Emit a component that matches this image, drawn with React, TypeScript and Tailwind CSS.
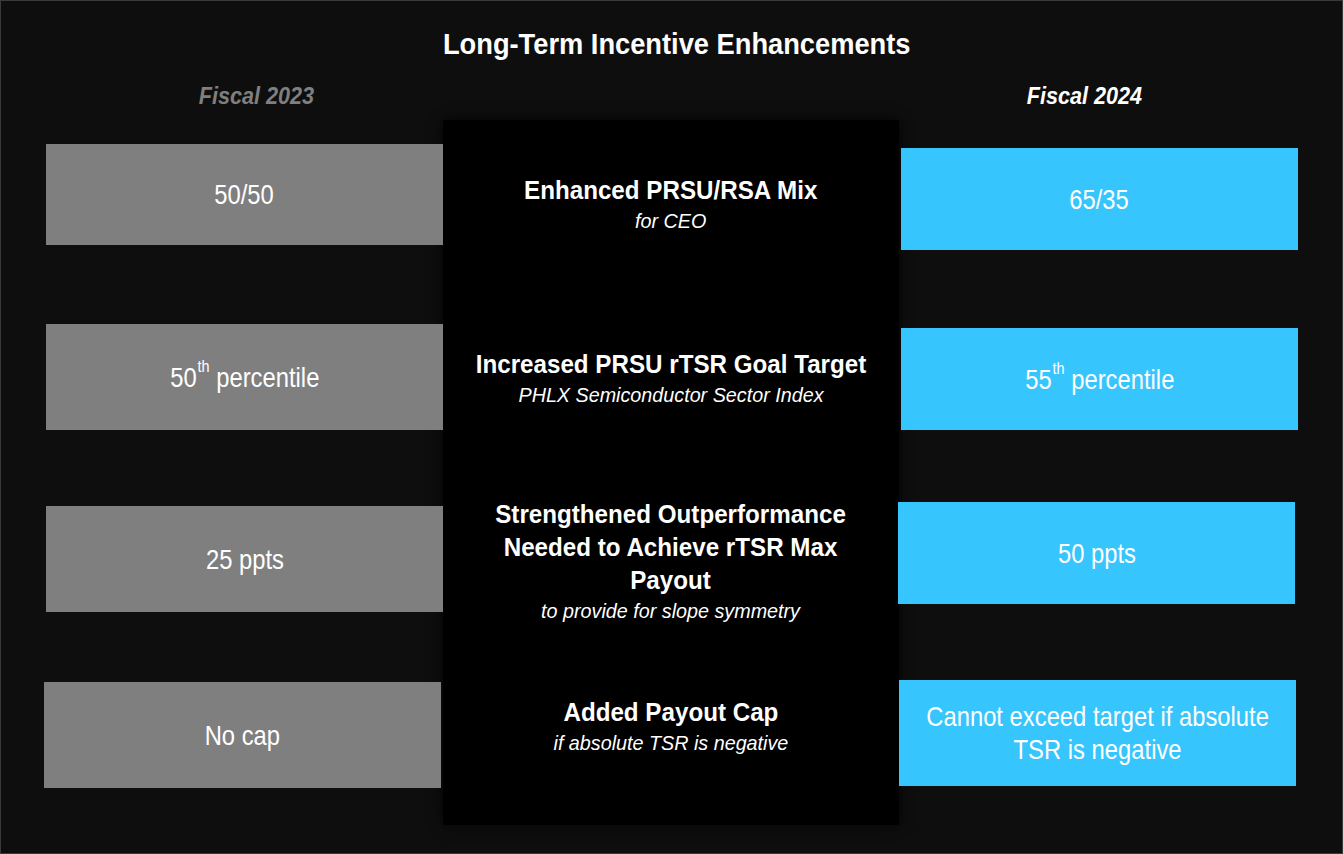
import React from "react";

const sans = { fontFamily: '"Liberation Sans", Arial, sans-serif' };

type Box = { text: React.ReactNode; className: string };

const sup = "text-[17px] -top-[15px] ml-[1px]";

const before: Box[] = [
  { text: "50/50", className: "mt-[24px] h-[101px]" },
  {
    text: (
      <>
        50<sup className={sup}>th</sup> percentile
      </>
    ),
    className: "mt-[79px] h-[106px]",
  },
  { text: "25 ppts", className: "mt-[76px] h-[106px]" },
  { text: "No cap", className: "mt-[70px] h-[106px] -ml-[2px]" },
];

const after: Box[] = [
  { text: "65/35", className: "mt-[28px] h-[102px]" },
  {
    text: (
      <>
        55<sup className={sup}>th</sup> percentile
      </>
    ),
    className: "mt-[78px] h-[102px]",
  },
  { text: "50 ppts", className: "mt-[72px] h-[102px] -ml-[3px]" },
  {
    text: (
      <>
        Cannot exceed target if absolute
        <br />
        TSR is negative
      </>
    ),
    className: "mt-[76px] h-[106px] -ml-[2px]",
  },
];

const changes = [
  { title: ["Enhanced PRSU/RSA Mix"], sub: "for CEO", className: "mt-[54px]" },
  { title: ["Increased PRSU rTSR Goal Target"], sub: "PHLX Semiconductor Sector Index", className: "mt-[113px]" },
  {
    title: ["Strengthened Outperformance", "Needed to Achieve rTSR Max", "Payout"],
    sub: "to provide for slope symmetry",
    className: "mt-[89px]",
  },
  { title: ["Added Payout Cap"], sub: "if absolute TSR is negative", className: "mt-[71px]" },
];

export default function App() {
  return (
    <div
      className="w-[1343px] h-[854px] bg-[#0e0e0e] border border-[#3a3a3a] text-white overflow-hidden"
      style={sans}
    >
      {/* Title */}
      <h1 className="pt-[27px] pl-[10px] text-center text-[29px] leading-[32px] font-bold">
        <span className="inline-block whitespace-nowrap scale-x-[0.94]">Long-Term Incentive Enhancements</span>
      </h1>

      {/* Year labels */}
      <div className="mt-[23px] flex justify-between">
        <div className="w-[511px] text-center text-[23px] leading-[26px] font-bold italic text-[#7f7f7f]">
          <span className="inline-block scale-x-[0.94]">Fiscal 2023</span>
        </div>
        <div className="w-[516px] text-center text-[23px] leading-[26px] font-bold italic">
          <span className="inline-block scale-x-[0.94]">Fiscal 2024</span>
        </div>
      </div>

      {/* Comparison */}
      <div className="mt-[11px] flex pl-[45px]">
        <div className="relative z-10 w-[397px] flex flex-col">
          {before.map((b, i) => (
            <div
              key={i}
              className={`${b.className} w-[397px] flex items-center justify-center bg-[#7f7f7f] text-[28px] leading-[33px]`}
            >
              <span className="inline-block whitespace-nowrap scale-x-[0.85]">{b.text}</span>
            </div>
          ))}
        </div>

        <div className="w-[456px] h-[705px] bg-black shadow-[0_0_12px_rgba(0,0,0,0.85)] flex flex-col items-center text-center">
          {changes.map((c, i) => (
            <div key={i} className={c.className}>
              {c.title.map((t) => (
                <div key={t} className="text-[26px] leading-[33px] font-bold whitespace-nowrap scale-x-[0.93]">
                  {t}
                </div>
              ))}
              <div className="-mt-[1px] text-[21px] leading-[29px] italic whitespace-nowrap scale-x-[0.94]">
                {c.sub}
              </div>
            </div>
          ))}
        </div>

        <div className="relative z-10 w-[399px] ml-[2px] flex flex-col">
          {after.map((b, i) => (
            <div
              key={i}
              className={`${b.className} w-[397px] flex items-center justify-center text-center bg-[#36c5fd] text-[28px] leading-[33px]`}
            >
              <span className="inline-block whitespace-nowrap scale-x-[0.85]">{b.text}</span>
            </div>
          ))}
        </div>
      </div>
    </div>
  );
}
